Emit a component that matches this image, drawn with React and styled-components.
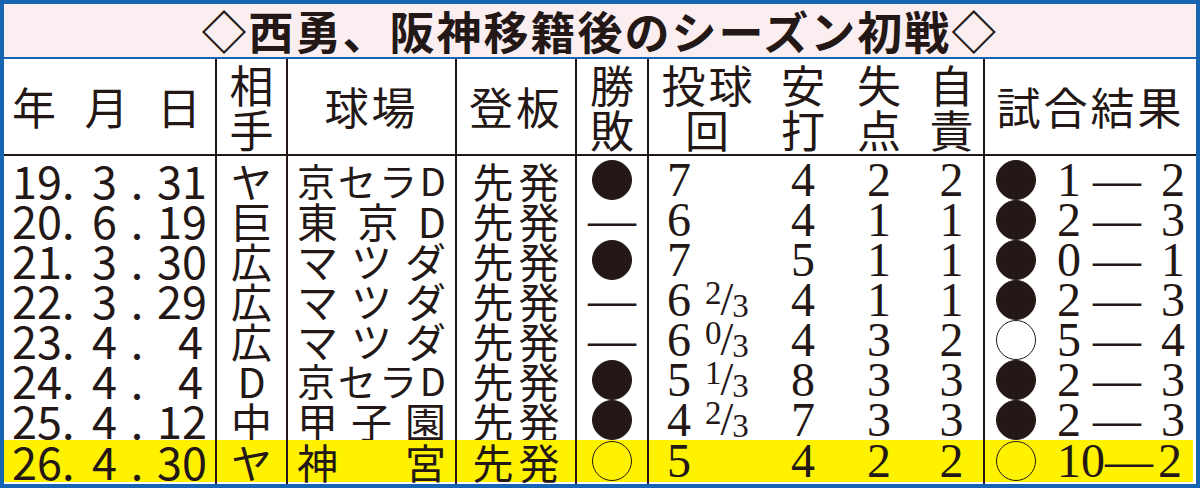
import React from "react";
import styled, { createGlobalStyle } from "styled-components";

const INK = "#231815";
const BLUE = "#1764b3";
const HILITE = "#fff200";

const GlobalStyle = createGlobalStyle`
  html, body { margin: 0; padding: 0; background: #fff; }
  body {
    font-family: "Noto Sans CJK JP", sans-serif;
    color: ${INK};
  }
`;

// outer blue frame
const Frame = styled.div`
  box-sizing: border-box;
  width: 1200px;
  height: 488px;
  border: 4px solid ${BLUE};
  background: #fff;
  display: flex;
  flex-direction: column;
`;

const Title = styled.h1`
  box-sizing: border-box;
  margin: 0;
  height: 55px;
  border-bottom: 2px solid ${BLUE};
  background: #fbeef1;
  display: flex;
  align-items: center;
  justify-content: center;
  font-size: 45px;
  font-weight: 700;
  letter-spacing: 2px;
  line-height: 1;
`;

const Table = styled.div`
  display: grid;
  grid-template-columns: 213px 71px 169px 120px 72px 119px 70px 82px 65px 211px;
  grid-template-rows: 97px 44px repeat(6, 40px) 44px;
`;

const Cell = styled.div`
  box-sizing: border-box;
  min-width: 0;
  display: flex;
  align-items: center;
  justify-content: ${(p) => p.$justify || "center"};
  border-right: ${(p) => (p.$line ? `2px solid ${INK}` : "none")};
  padding-top: ${(p) => (p.$first ? "4px" : 0)};
  padding-bottom: ${(p) => (p.$last ? "2px" : 0)};
  padding-right: ${(p) => (p.$last && p.$end ? "3px" : 0)};
  background: ${(p) => (p.$last ? HILITE : "transparent")};
  background-clip: content-box;
  font-size: 41px;
  line-height: 40px;
`;

const Word = styled.span`
  letter-spacing: 5px;
  margin-right: -5px;
`;

const HeadCell = styled.div`
  box-sizing: border-box;
  display: flex;
  flex-direction: column;
  align-items: center;
  justify-content: center;
  border-bottom: 2px solid ${INK};
  border-right: ${(p) => (p.$line ? `2px solid ${INK}` : "none")};
  font-size: 44px;
  line-height: 45px;
  letter-spacing: ${(p) => (p.$wide ? "3px" : 0)};
  white-space: nowrap;
`;

const Spread = styled.div`
  box-sizing: border-box;
  width: 100%;
  display: flex;
  justify-content: space-between;
  align-items: center;
  padding: ${(p) => p.$pad || "0"};
  font-size: ${(p) => p.$size || 44}px;
`;

const DatePart = styled.span`
  width: ${(p) => p.$w}px;
  text-align: ${(p) => p.$align || "left"};
  flex: none;
`;

const DateBox = styled.div`
  display: flex;
  align-items: center;
  padding-left: 8px;
  font-size: 45px;
`;

const Serif = styled.span`
  font-family: "Liberation Serif", "Noto Sans CJK JP", serif;
  font-size: 48px;
  line-height: 40px;
`;

const Frac = styled.span`
  display: inline-flex;
  height: 37px;
  margin-left: 14px;
  font-family: "Liberation Serif", serif;
  font-size: 33px;
  line-height: 0.72;
`;

const FracNum = styled.span`
  align-self: flex-start;
`;

const FracBar = styled.span`
  align-self: center;
  font-size: 46px;
  line-height: 1;
  margin: 0 -1px;
`;

const FracDen = styled.span`
  align-self: flex-end;
`;

const Mark = styled.span`
  display: block;
  flex: none;
  box-sizing: border-box;
  width: 40px;
  height: 40px;
  border-radius: 50%;
  border: 1.5px solid ${INK};
  background: ${(p) => (p.$filled ? INK : "transparent")};
`;

const Result = styled.div`
  box-sizing: border-box;
  width: 100%;
  display: flex;
  align-items: center;
  padding: 0 11px 0 11px;
`;

const ScoreL = styled(Serif)`
  min-width: 36px;
  margin-left: 21px;
`;

const ScoreR = styled(Serif)`
  margin-left: auto;
`;

const games = [
  { y: "19", m: "3", d: "31", opp: "ヤ", park: "京セラD", wl: "L", ip: "7", h: 4, r: 2, er: 2, a: 1, b: 2 },
  { y: "20", m: "6", d: "19", opp: "巨", park: "東京D", wl: "-", ip: "6", h: 4, r: 1, er: 1, a: 2, b: 3 },
  { y: "21", m: "3", d: "30", opp: "広", park: "マツダ", wl: "L", ip: "7", h: 5, r: 1, er: 1, a: 0, b: 1 },
  { y: "22", m: "3", d: "29", opp: "広", park: "マツダ", wl: "-", ip: "6", frac: "2", h: 4, r: 1, er: 1, a: 2, b: 3 },
  { y: "23", m: "4", d: "4", opp: "広", park: "マツダ", wl: "-", ip: "6", frac: "0", h: 4, r: 3, er: 2, a: 5, b: 4 },
  { y: "24", m: "4", d: "4", opp: "D", park: "京セラD", wl: "L", ip: "5", frac: "1", h: 8, r: 3, er: 3, a: 2, b: 3 },
  { y: "25", m: "4", d: "12", opp: "中", park: "甲子園", wl: "L", ip: "4", frac: "2", h: 7, r: 3, er: 3, a: 2, b: 3 },
  { y: "26", m: "4", d: "30", opp: "ヤ", park: "神宮", wl: "W", ip: "5", h: 4, r: 2, er: 2, a: 10, b: 2 },
];

const WinLoss = ({ v }) => {
  if (v === "-") return <Serif>—</Serif>;
  return <Mark $filled={v === "L"} />;
};

const Row = ({ g, i }) => {
  const pos = { $first: i === 0, $last: i === games.length - 1 };
  const chars = Array.from(g.park);
  return (
    <>
      <Cell {...pos} $line $justify="flex-start">
        <DateBox>
          <DatePart $w={63}>{g.y}.</DatePart>
          <DatePart $w={42} $align="right">{g.m}</DatePart>
          <DatePart $w={40} $align="center">.</DatePart>
          <DatePart $w={46} $align="right">{g.d}</DatePart>
        </DateBox>
      </Cell>
      <Cell {...pos} $line>{g.opp}</Cell>
      <Cell {...pos} $line>
        <Spread $pad="0 9px 0 9px" $size={chars.length > 3 ? 38 : 41}>
          {chars.map((c, k) => (
            <span key={k}>{c}</span>
          ))}
        </Spread>
      </Cell>
      <Cell {...pos} $line>
        <Word>先発</Word>
      </Cell>
      <Cell {...pos} $line>
        <WinLoss v={g.wl} />
      </Cell>
      <Cell {...pos} $justify="flex-start">
        <Serif style={{ paddingLeft: 18 }}>{g.ip}</Serif>
        {g.frac && (
          <Frac>
            <FracNum>{g.frac}</FracNum>
            <FracBar>/</FracBar>
            <FracDen>3</FracDen>
          </Frac>
        )}
      </Cell>
      <Cell {...pos}>
        <Serif>{g.h}</Serif>
      </Cell>
      <Cell {...pos}>
        <Serif>{g.r}</Serif>
      </Cell>
      <Cell {...pos} $line>
        <Serif>{g.er}</Serif>
      </Cell>
      <Cell {...pos} $end>
        <Result>
          <Mark $filled={g.a < g.b} />
          <ScoreL>{g.a}</ScoreL>
          <Serif>—</Serif>
          <ScoreR>{g.b}</ScoreR>
        </Result>
      </Cell>
    </>
  );
};

export default function App() {
  return (
    <>
      <GlobalStyle />
      <Frame>
        <Title>◇西勇、阪神移籍後のシーズン初戦◇</Title>
        <Table>
          <HeadCell $line>
            <Spread $pad="0 14px 0 8px">
              <span>年</span>
              <span>月</span>
              <span>日</span>
            </Spread>
          </HeadCell>
          <HeadCell $line>
            <span>相</span>
            <span>手</span>
          </HeadCell>
          <HeadCell $line $wide>球場</HeadCell>
          <HeadCell $line $wide>登板</HeadCell>
          <HeadCell $line>
            <span>勝</span>
            <span>敗</span>
          </HeadCell>
          <HeadCell $wide>
            <span>投球</span>
            <span>回</span>
          </HeadCell>
          <HeadCell>
            <span>安</span>
            <span>打</span>
          </HeadCell>
          <HeadCell>
            <span>失</span>
            <span>点</span>
          </HeadCell>
          <HeadCell $line>
            <span>自</span>
            <span>責</span>
          </HeadCell>
          <HeadCell $wide>試合結果</HeadCell>
          {games.map((g, i) => (
            <Row key={i} g={g} i={i} />
          ))}
        </Table>
      </Frame>
    </>
  );
}
